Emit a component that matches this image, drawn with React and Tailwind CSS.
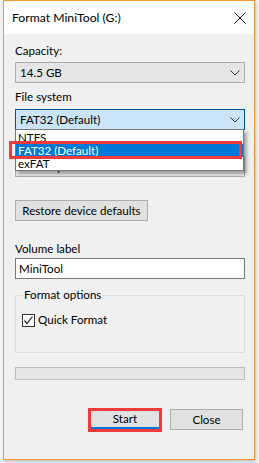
import React from "react";

const Chevron = () => (
  <svg width="10" height="6" viewBox="0 0 10 6" className="shrink-0">
    <polyline points="0.5,0.5 5,5 9.5,0.5" fill="none" stroke="#333" strokeWidth="1" />
  </svg>
);

export default function App() {
  const font = { fontFamily: 'Lato, "Noto Sans", sans-serif' };
  return (
    <div className="w-[259px] h-[463px] bg-[#f4f4f4] overflow-hidden" style={font}>
      <div className="relative ml-[3px] w-[252px] h-[460px] border border-[#f7962a] bg-[#f0f0f0] shadow-[1px_2px_3px_rgba(0,0,0,0.2)] text-[11.6px] leading-[16px] text-black flex flex-col">
        {/* Title bar */}
        <div className="h-[33px] bg-white flex items-center justify-between pl-[8px] pr-[8px] shrink-0">
          <span className="text-[12.2px] pt-[1px]">Format MiniTool (G:)</span>
          <svg width="12" height="12" viewBox="0 0 12 12">
            <path d="M0.5 0.5 L11.5 11.5 M11.5 0.5 L0.5 11.5" stroke="#111" strokeWidth="1" />
          </svg>
        </div>

        {/* Body */}
        <div className="flex flex-col pl-[11px] pr-[9px]">
          <div className="mt-[9px] h-[16px]">Capacity:</div>
          <div className="mt-[3px] h-[21px] bg-[#e5e5e5] border border-[#adadad] flex items-center justify-between pl-[4px] pr-[4px]">
            <span>14.5 GB</span>
            <Chevron />
          </div>

          <div className="mt-[6px] h-[16px]">File system</div>
          <div className="relative mt-[4px]">
            <div className="h-[21px] bg-[#cce4f7] border border-[#005499] flex items-center justify-between pl-[4px] pr-[4px]">
              <span>FAT32 (Default)</span>
              <Chevron />
            </div>

            {/* dropdown list overlay */}
            <div className="absolute left-0 top-[20px] w-[229px] h-[42px] bg-white border border-[#767676] shadow-[3px_3px_3px_rgba(0,0,0,0.3)] z-10 flex flex-col pt-[1px] leading-[13px]">
              <div className="h-[13px] pl-[2px]">NTFS</div>
              <div className="h-[14px] pl-[2px] bg-[#0078d7] text-white">FAT32 (Default)</div>
              <div className="h-[13px] pl-[2px]">exFAT</div>
            </div>
            {/* red highlight */}
            <div className="absolute left-[-6px] top-[32px] w-[233px] h-[18px] border-[3px] border-[#f23a3a] z-20" />
          </div>

          {/* allocation unit label hidden under the open list */}
          <div className="mt-[7px] h-[16px]" />
          <div className="mt-[3px] h-[21px] bg-[#e5e5e5] border border-[#adadad] flex items-center justify-between pl-[4px] pr-[4px]">
            <span>4096 bytes</span>
            <Chevron />
          </div>

          <div className="mt-[23px] w-[133px] h-[21px] bg-[#e1e1e1] border border-[#adadad] flex items-center justify-center">
            Restore device defaults
          </div>

          <div className="mt-[20px] h-[16px]">Volume label</div>
          <div className="mt-[1px] h-[21px] bg-white border border-[#7a7a7a] flex items-center pl-[3px]">
            MiniTool
          </div>

          <fieldset className="mt-[8px] h-[66px] border border-[#dcdcdc] px-[6px]">
            <legend className="ml-[1px] px-[1px]">Format options</legend>
            <div className="mt-[9px] flex items-center gap-[3px]">
              <div className="w-[13px] h-[13px] border border-[#333] bg-white flex items-center justify-center">
                <svg width="11" height="11" viewBox="0 0 11 11">
                  <polyline points="1.5,5.5 4,8.5 9.5,1.5" fill="none" stroke="#222" strokeWidth="1.2" />
                </svg>
              </div>
              <span>Quick Format</span>
            </div>
          </fieldset>

          <div className="mt-[14px] h-[13px] bg-[#e6e6e6] border border-[#bcbcbc]" />

          <div className="mt-[28px] flex justify-end items-start gap-[8px] pr-[2px]">
            <div className="w-[74px] h-[24px] border-[3px] border-[#f23a3a] flex">
              <div className="flex-1 bg-[#e1e1e1] border-b-2 border-[#0078d7] flex items-center justify-center">
                Start
              </div>
            </div>
            <div className="mt-[1px] w-[73px] h-[21px] bg-[#e1e1e1] border border-[#adadad] flex items-center justify-center">
              Close
            </div>
          </div>
        </div>
      </div>
    </div>
  );
}
